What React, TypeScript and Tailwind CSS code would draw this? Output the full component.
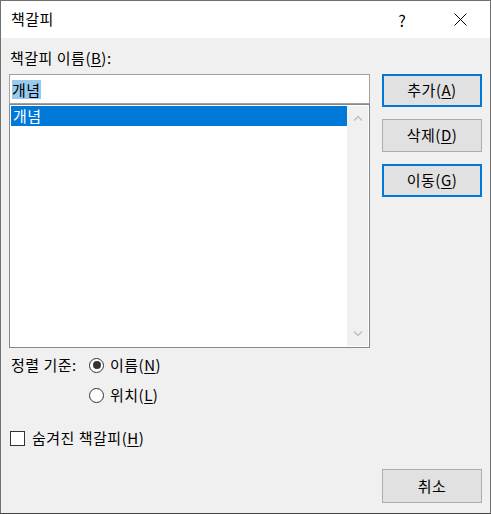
import React from 'react';

const font = { fontFamily: '"Noto Sans CJK KR", "Noto Sans", sans-serif' };

const Key: React.FC<{ k: string }> = ({ k }) => (
  <>
    (<span className="underline underline-offset-2">{k}</span>)
  </>
);

const Button: React.FC<{ label: string; k?: string; focused?: boolean; tall?: boolean }> = ({
  label,
  k,
  focused,
  tall,
}) => (
  <button
    className={`w-[100px] ${tall ? 'h-[34px]' : 'h-[33px]'} bg-[#e1e1e1] text-[15px] tracking-[0.5px] text-black flex items-center justify-center ${
      focused ? 'border-2 border-[#0078d7]' : 'border border-[#adadad]'
    }`}
  >
    {label}
    {k && <Key k={k} />}
  </button>
);

const Radio: React.FC<{ checked?: boolean }> = ({ checked }) => (
  <span className="w-[15px] h-[15px] rounded-full border border-[#333] bg-white flex items-center justify-center mr-[6px]">
    {checked && <span className="w-[8px] h-[8px] rounded-full bg-[#333]" />}
  </span>
);

const Chevron: React.FC<{ up?: boolean }> = ({ up }) => (
  <svg width="10" height="6" viewBox="0 0 10 6" className="block">
    <path
      d={up ? 'M1 5.5 L5 1.5 L9 5.5' : 'M1 0.5 L5 4.5 L9 0.5'}
      fill="none"
      stroke="#c0c0c0"
      strokeWidth="1.5"
    />
  </svg>
);

export default function App() {
  return (
    <div
      className="w-[491px] h-[514px] border border-[#707070] border-b-[#444] bg-[#f0f0f0] flex flex-col text-black"
      style={font}
    >
      {/* title bar */}
      <div className="h-[37px] bg-white flex items-center pl-[10px] shrink-0">
        <span className="text-[15px] tracking-[0.5px]">책갈피</span>
        <span className="ml-auto text-[16px] w-[12px] text-center mr-[46px]">?</span>
        <svg width="13" height="13" viewBox="0 0 13 13" className="mr-[23px]">
          <path d="M0.5 0.5 L12.5 12.5 M12.5 0.5 L0.5 12.5" stroke="#000" strokeWidth="1" />
        </svg>
      </div>

      <div className="flex-1 pl-[8px] pr-[8px] flex flex-col text-[15px] tracking-[0.5px]">
        <div className="mt-[10px] h-[20px] leading-[20px] pl-[1px]">
          책갈피 이름<Key k="B" />:
        </div>

        <div className="mt-[6px] flex">
          <div className="w-[361px]">
            <div className="h-[30px] border border-[#a0a0a0] bg-white flex items-center pl-[2px]">
              <span className="bg-[#99c9ef] leading-[19px]">개념</span>
            </div>
            <div className="h-[244px] border border-[#828790] bg-white flex p-[1px]">
              <div className="flex-1">
                <div className="h-[20px] bg-[#0078d7] text-white leading-[20px] pl-[2px]">
                  개념
                </div>
              </div>
              <div className="w-[21px] bg-[#f0f0f0] flex flex-col items-center justify-between py-[9px]">
                <Chevron up />
                <Chevron />
              </div>
            </div>
          </div>

          <div className="ml-[12px] flex flex-col gap-[12px]">
            <Button label="추가" k="A" focused />
            <Button label="삭제" k="D" />
            <Button label="이동" k="G" focused />
          </div>
        </div>

        <div className="mt-[7px] flex">
          <div className="h-[20px] leading-[20px] pl-[2px] w-[80px]">정렬 기준:</div>
          <div className="flex flex-col gap-[10px]">
            <div className="h-[20px] flex items-center">
              <Radio checked />
              이름<Key k="N" />
            </div>
            <div className="h-[20px] flex items-center">
              <Radio />
              위치<Key k="L" />
            </div>
          </div>
        </div>

        <div className="mt-[23px] h-[20px] flex items-center">
          <span className="w-[15px] h-[15px] border border-[#333] bg-white mr-[7px] ml-[1px]" />
          숨겨진 책갈피<Key k="H" />
        </div>

        <div className="mt-[21px] flex justify-end">
          <Button label="취소" tall />
        </div>
      </div>
    </div>
  );
}
